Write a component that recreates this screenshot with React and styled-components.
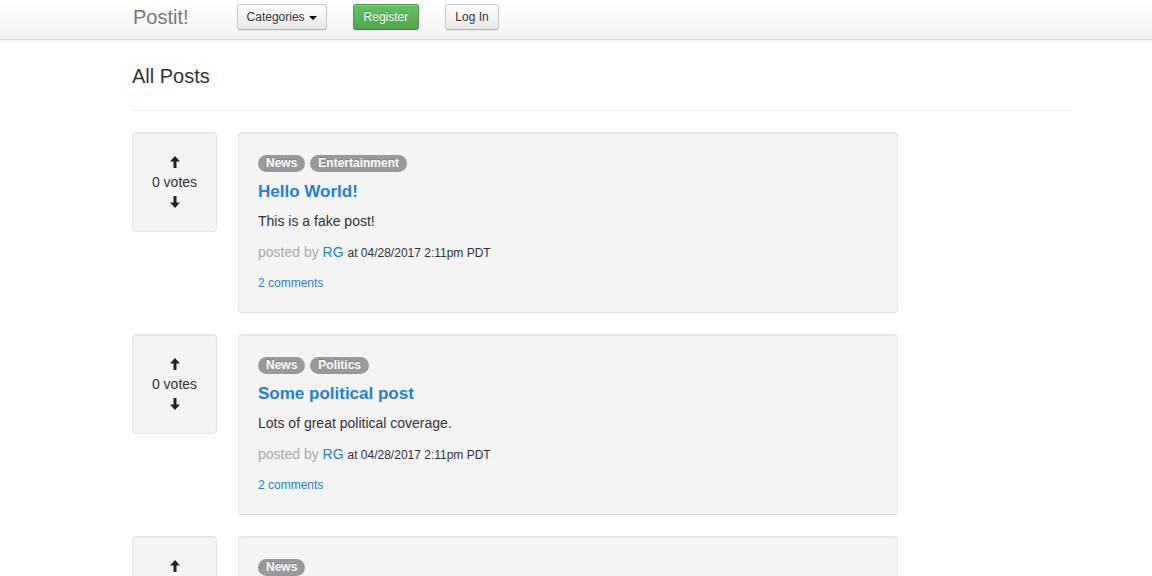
import React from 'react';
import styled, { createGlobalStyle } from 'styled-components';

const GlobalStyle = createGlobalStyle`
  html, body {
    margin: 0;
    padding: 0;
    background: #fff;
    font-family: 'Liberation Sans', Arial, Helvetica, sans-serif;
    font-size: 14px;
    color: #333;
  }
`;

const Navbar = styled.header`
  height: 39px;
  background: linear-gradient(to bottom, #ffffff, #f2f2f2);
  border-bottom: 1px solid #d4d4d4;
  box-shadow: 0 1px 4px rgba(0, 0, 0, 0.065);
`;

const NavInner = styled.div`
  width: 940px;
  margin-left: 132px;
  height: 100%;
  display: flex;
  align-items: flex-start;
  padding-top: 4px;
  box-sizing: border-box;
`;

const Brand = styled.a`
  font-size: 20px;
  color: #777;
  text-decoration: none;
  margin-left: 1px;
  margin-right: 48px;
  line-height: 26px;
`;

const NavButton = styled.button`
  font-family: inherit;
  font-size: 12px;
  line-height: 14px;
  height: 26px;
  padding: 0 ${p => p.$pad || 10}px;
  margin-right: 26px;
  border-radius: 3px;
  cursor: pointer;
  display: flex;
  align-items: center;
  gap: 4px;
  color: ${p => (p.$primary ? '#fff' : '#333')};
  text-shadow: ${p => (p.$primary ? '0 -1px 0 rgba(0,0,0,0.25)' : '0 1px 1px rgba(255,255,255,0.75)')};
  background: ${p =>
    p.$primary
      ? 'linear-gradient(to bottom, #62c462, #51a351)'
      : 'linear-gradient(to bottom, #ffffff, #e6e6e6)'};
  border: 1px solid ${p => (p.$primary ? '#4a9a4a' : '#c8c8c8')};
  border-bottom-color: ${p => (p.$primary ? '#3f8a3f' : '#b3b3b3')};
  box-shadow: inset 0 1px 0 rgba(255, 255, 255, 0.2), 0 1px 2px rgba(0, 0, 0, 0.05);
`;

const Caret = styled.span`
  display: inline-block;
  width: 0;
  height: 0;
  border-left: 4px solid transparent;
  border-right: 4px solid transparent;
  border-top: 4px solid #000;
  margin-top: 1px;
`;

const Container = styled.main`
  width: 940px;
  margin-left: 132px;
`;

const PageTitle = styled.h1`
  font-size: 20px;
  font-weight: normal;
  line-height: 24px;
  margin: 0;
  padding-top: 24px;
  color: #333;
`;

const Rule = styled.hr`
  border: 0;
  border-top: 1px solid #eee;
  margin: 22px 0 21px;
`;

const PostRow = styled.div`
  display: flex;
  align-items: flex-start;
  gap: 21px;
  margin-bottom: 21px;
`;

const Well = styled.div`
  box-sizing: border-box;
  background: #f4f4f4;
  border: 1px solid #e3e3e3;
  border-radius: 4px;
  box-shadow: inset 0 1px 1px rgba(0, 0, 0, 0.05);
  padding: 19px;
  width: ${p => p.$width}px;
  flex-shrink: 0;
`;

const VoteBox = styled(Well)`
  padding: 19px 6px;
  text-align: center;
  line-height: 20px;
  font-size: 14px;
  white-space: nowrap;
`;

const ArrowLine = styled.div`
  height: 20px;
  display: flex;
  align-items: center;
  justify-content: center;
`;

const Tags = styled.div`
  height: 20px;
  display: flex;
  align-items: center;
  gap: 5px;
`;

const Badge = styled.span`
  display: inline-block;
  background: #999;
  color: #fff;
  font-size: 12px;
  font-weight: bold;
  line-height: 17px;
  height: 17px;
  padding: 0 8px;
  margin-top: 2px;
  border-radius: 9px;
  text-shadow: 0 -1px 0 rgba(0, 0, 0, 0.2);
`;

const PostTitle = styled.a`
  display: block;
  font-size: 17px;
  font-weight: bold;
  line-height: 20px;
  margin-top: 10px;
  color: #2181d3;
  text-decoration: none;
`;

const Body = styled.p`
  margin: 9px 0 0;
  line-height: 20px;
  font-size: 14px;
  color: #333;
`;

const Meta = styled.div`
  margin-top: 11px;
  line-height: 20px;
  font-size: 14px;
  color: #aaa;
`;

const Link = styled.a`
  color: #2181d3;
  text-decoration: none;
`;

const Stamp = styled.span`
  font-size: 12px;
  color: #333;
`;

const Comments = styled.div`
  margin-top: 10px;
  line-height: 20px;
  font-size: 12px;
`;

const Arrow = ({ down }) => (
  <svg width="10" height="12" viewBox="0 0 10 12" style={{ transform: down ? 'rotate(180deg)' : 'none' }}>
    <path d="M5 0 L10 5.5 L6.5 5.5 L6.5 12 L3.5 12 L3.5 5.5 L0 5.5 Z" fill="#222" />
  </svg>
);

const posts = [
  { tags: ['News', 'Entertainment'], title: 'Hello World!', body: 'This is a fake post!' },
  { tags: ['News', 'Politics'], title: 'Some political post', body: 'Lots of great political coverage.' },
  { tags: ['News'], title: 'Another post', body: 'More news.' },
];

export default function App() {
  return (
    <>
      <GlobalStyle />
      <Navbar>
        <NavInner>
          <Brand href="#">Postit!</Brand>
          <NavButton $pad={9}>
            Categories <Caret />
          </NavButton>
          <NavButton $primary $pad={10}>Register</NavButton>
          <NavButton $pad={9}>Log In</NavButton>
        </NavInner>
      </Navbar>
      <Container>
        <PageTitle>All Posts</PageTitle>
        <Rule />
        {posts.map((post, i) => (
          <PostRow key={i}>
            <VoteBox $width={85}>
              <ArrowLine><Arrow /></ArrowLine>
              <div>0 votes</div>
              <ArrowLine><Arrow down /></ArrowLine>
            </VoteBox>
            <Well $width={660}>
              <Tags>
                {post.tags.map(t => (
                  <Badge key={t}>{t}</Badge>
                ))}
              </Tags>
              <PostTitle href="#">{post.title}</PostTitle>
              <Body>{post.body}</Body>
              <Meta>
                posted by <Link href="#">RG</Link> <Stamp>at 04/28/2017 2:11pm PDT</Stamp>
              </Meta>
              <Comments>
                <Link href="#">2 comments</Link>
              </Comments>
            </Well>
          </PostRow>
        ))}
      </Container>
    </>
  );
}
